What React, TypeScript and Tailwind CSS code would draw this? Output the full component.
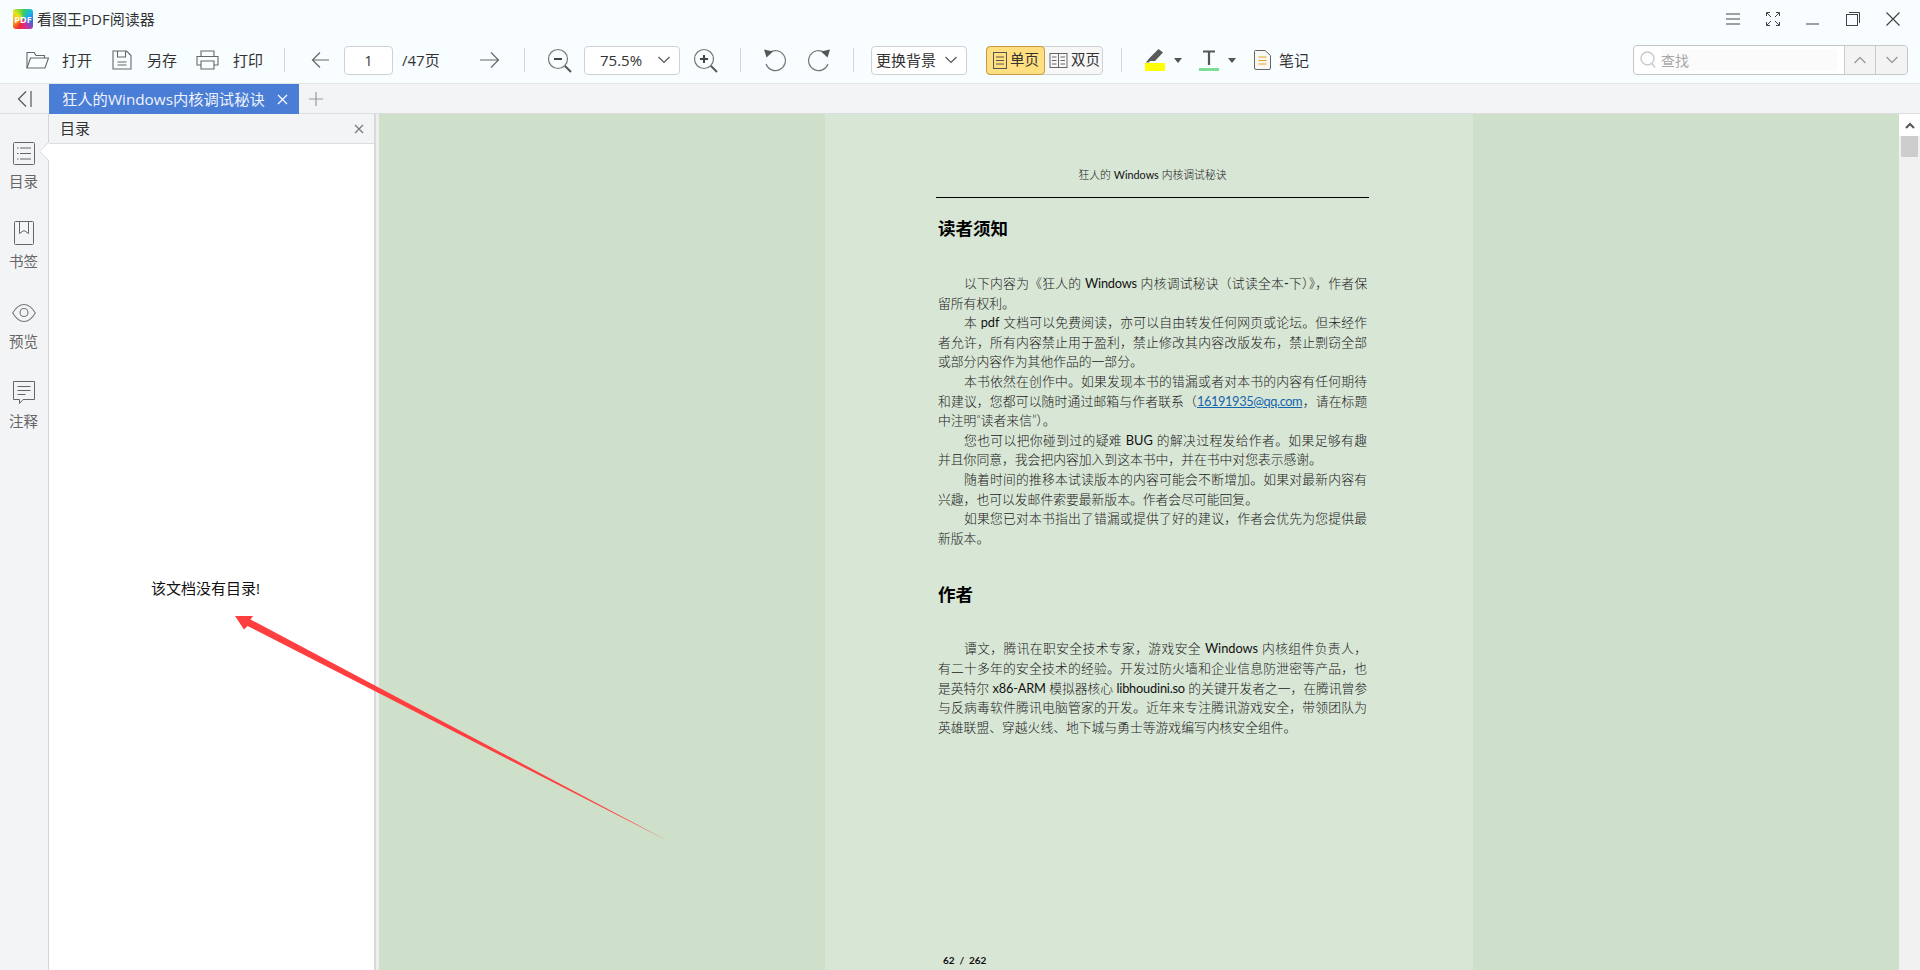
import React from "react"

const Sep = ({ className = "" }: { className?: string }) => (
  <div className={`h-[24px] w-px shrink-0 bg-[#d4d6d8] ${className}`} />
)

const Chevron = ({ className = "" }: { className?: string }) => (
  <svg width="14" height="8" viewBox="0 0 14 8" fill="none" stroke="#555" strokeWidth="1.2" className={className}>
    <path d="M1.5 1L7 6.5 12.5 1" />
  </svg>
)

const Caret = ({ className = "" }: { className?: string }) => (
  <svg width="8" height="5" viewBox="0 0 8 5" fill="#555" className={`shrink-0 ${className}`}>
    <path d="M0 0h8L4 5z" />
  </svg>
)

const Magnifier = ({ plus, className = "" }: { plus?: boolean; className?: string }) => (
  <svg width="25" height="25" viewBox="0 0 25 25" fill="none" className={`shrink-0 ${className}`}>
    <circle cx="11" cy="11" r="9.5" stroke="#777" strokeWidth="1.2" />
    <path d="M7 11h8" stroke="#444" strokeWidth="2" />
    {plus && <path d="M11 7v8" stroke="#444" strokeWidth="2" />}
    <path d="M18 18l6 6" stroke="#555" strokeWidth="2" />
  </svg>
)

const Rotate = ({ flip, className = "" }: { flip?: boolean; className?: string }) => (
  <svg width="24" height="24" viewBox="0 0 24 24" fill="none" className={`shrink-0 ${flip ? "-scale-x-100" : ""} ${className}`}>
    <path d="M6.5 4.5A10 10 0 1 1 3 16" stroke="#777" strokeWidth="1.2" />
    <path d="M1 1.5l9 2-6.5 6z" fill="#555" />
  </svg>
)

const PageLines = () => (
  <svg width="16" height="19" viewBox="0 0 16 19" fill="none" stroke="#555" className="shrink-0">
    <rect x="1.5" y="1.5" width="13" height="16" />
    <path d="M4 6h8M4 9.500h8M4 13h8" />
  </svg>
)

const BookLines = () => (
  <svg width="19" height="17" viewBox="0 0 19 17" fill="none" stroke="#666" className="shrink-0">
    <rect x="1" y="1.500" width="17" height="14" />
    <path d="M9.500 1.500v14M3 5h4.500M3 8.500h4.500M3 12h4.500M11.500 5H16M11.500 8.500H16M11.500 12H16" />
  </svg>
)

type Line = { t: string; i?: number; j?: number; mail?: string; k?: string }

const firstBlock: Line[] = [
  { t: "以下内容为《狂人的 Windows 内核调试秘诀（试读全本-下）》，作者保", i: 1, j: 1, k: "tracking-[-0.2px]" },
  { t: "留所有权利。" },
  { t: "本 pdf 文档可以免费阅读，亦可以自由转发任何网页或论坛。但未经作", i: 1, j: 1 },
  { t: "者允许，所有内容禁止用于盈利，禁止修改其内容改版发布，禁止剽窃全部", j: 1 },
  { t: "或部分内容作为其他作品的一部分。" },
  { t: "本书依然在创作中。如果发现本书的错漏或者对本书的内容有任何期待", i: 1, j: 1 },
  { t: "和建议，您都可以随时通过邮箱与作者联系（", mail: "，请在标题", j: 1, k: "tracking-[-0.4px]" },
  { t: "中注明“读者来信”）。" },
  { t: "您也可以把你碰到过的疑难 BUG 的解决过程发给作者。如果足够有趣", i: 1, j: 1 },
  { t: "并且你同意，我会把内容加入到这本书中，并在书中对您表示感谢。" },
  { t: "随着时间的推移本试读版本的内容可能会不断增加。如果对最新内容有", i: 1, j: 1 },
  { t: "兴趣，也可以发邮件索要最新版本。作者会尽可能回复。" },
  { t: "如果您已对本书指出了错漏或提供了好的建议，作者会优先为您提供最", i: 1, j: 1 },
  { t: "新版本。" },
]

const secondBlock: Line[] = [
  { t: "谭文，腾讯在职安全技术专家，游戏安全 Windows 内核组件负责人，", i: 1, j: 1 },
  { t: "有二十多年的安全技术的经验。开发过防火墙和企业信息防泄密等产品，也", j: 1 },
  { t: "是英特尔 x86-ARM 模拟器核心 libhoudini.so 的关键开发者之一，在腾讯曾参", j: 1, k: "tracking-[-0.2px]" },
  { t: "与反病毒软件腾讯电脑管家的开发。近年来专注腾讯游戏安全，带领团队为", j: 1 },
  { t: "英雄联盟、穿越火线、地下城与勇士等游戏编写内核安全组件。" },
]

// latin words sit in a heavier weight than the thin CJK body
function Mixed({ text }: { text: string }) {
  return (
    <>
      {text.split(/([A-Za-z0-9.@-]+)/).map((part, idx) =>
        idx % 2 ? (
          <span key={idx} className="font-normal text-[#111]">
            {part}
          </span>
        ) : (
          part
        ),
      )}
    </>
  )
}

function Lines({ lines, className = "" }: { lines: Line[]; className?: string }) {
  return (
    <div className={`text-[12.8px] leading-[19.6px] font-light text-[#1a1a1a] ${className}`}>
      {lines.map((l, idx) => (
        <div key={idx} className={`h-[19.6px] ${l.i ? "pl-[26px]" : ""} ${l.j ? "text-justify [text-align-last:justify]" : ""} ${l.k ?? ""}`}>
          <Mixed text={l.t} />
          {l.mail && (
            <>
              <span className="font-normal text-[#1565ad] underline">16191935@qq.com</span>
              {l.mail}
            </>
          )}
        </div>
      ))}
    </div>
  )
}

const sideItems = [
  {
    label: "目录",
    icon: (
      <svg width="22" height="23" viewBox="0 0 22 23" fill="none" stroke="#666">
        <rect x="0.500" y="0.500" width="21" height="22" rx="1" />
        <path d="M4 6h1.500M7 6h11M4 11.500h1.500M7 11.500h11M4 17h1.500M7 17h11" />
      </svg>
    ),
  },
  {
    label: "书签",
    icon: (
      <svg width="22" height="24" viewBox="0 0 22 24" fill="none" stroke="#666">
        <rect x="1.500" y="0.500" width="19" height="23" rx="1" />
        <path d="M6.500 0.500v12l4.500-3 4.500 3v-12" />
      </svg>
    ),
  },
  {
    label: "预览",
    icon: (
      <svg width="24" height="24" viewBox="0 0 24 24" fill="none" stroke="#777" strokeWidth="1.100">
        <path d="M0.700 12C4 6.500 8 3.500 12 3.500s8 3 11.300 8.500C20 17.500 16 20.500 12 20.500S4 17.500 0.700 12z" />
        <circle cx="12" cy="11.500" r="4" />
      </svg>
    ),
  },
  {
    label: "注释",
    icon: (
      <svg width="22" height="24" viewBox="0 0 22 24" fill="none" stroke="#666">
        <path d="M0.500 0.500h21v18H10l-3.500 4v-4h-6z" />
        <path d="M4.500 5.500h13M4.500 9.500h13M4.500 13.500h8" />
      </svg>
    ),
  },
]

export default function App() {
  return (
    <div className="relative flex h-[970px] w-[1920px] flex-col overflow-hidden bg-[#f3f4f6] font-['Open_Sans','Noto_Sans_CJK_SC',sans-serif] text-[#333]">
      {/* title bar */}
      <div className="flex h-[38px] shrink-0 items-center bg-[#f8fdff] pl-[13px] pr-[20px]">
        <div className="flex h-[20px] w-[20px] items-center justify-center rounded-[3px] bg-[conic-gradient(from_0deg,#3fcf4f,#19b5e8,#2c6fe0,#d02ca0,#f02a30,#f6b010,#e7e418,#3fcf4f)] text-[9px] font-bold leading-none text-white">
          PDF
        </div>
        <span className="ml-[4px] text-[15px] text-[#333]">看图王PDF阅读器</span>
        <div className="ml-auto flex items-center gap-[26px] text-[#444]">
          <svg width="14" height="14" viewBox="0 0 14 14" fill="none" stroke="#444">
            <path d="M0 2h14M0 7h14M0 12h14" />
          </svg>
          <svg width="14" height="14" viewBox="0 0 14 14" fill="none" stroke="#444">
            <path d="M0.500 4V0.500H4M10 0.500h3.500V4M0.500 10v3.500H4M13.500 10v3.500H10M1 1l4 4M13 1L9 5M1 13l4-4M13 13L9 9" />
          </svg>
          <svg width="14" height="14" viewBox="0 0 14 14" fill="none" stroke="#444">
            <path d="M0 12h13" />
          </svg>
          <svg width="14" height="14" viewBox="0 0 14 14" fill="none" stroke="#444">
            <rect x="0.500" y="2.500" width="11" height="11" />
            <path d="M3 0.500h10.500V11" />
          </svg>
          <svg width="14" height="14" viewBox="0 0 14 14" fill="none" stroke="#444" strokeWidth="1.200">
            <path d="M0.500 0.500l13 13M13.500 0.500l-13 13" />
          </svg>
        </div>
      </div>

      {/* toolbar */}
      <div className="flex h-[46px] shrink-0 items-center border-b border-[#e4e5e6] bg-[#f8fdff] pb-[1px] pl-[26px] text-[15px] text-[#333]">
        <svg width="23" height="18" viewBox="0 0 23 18" fill="none" stroke="#666" strokeWidth="1.100" className="shrink-0">
          <path d="M1 17V1.500h7l2 3h8.500V7" />
          <path d="M1 17L4.500 7H22.500L19 17z" />
        </svg>
        <span className="ml-[13px] w-[30px] shrink-0">打开</span>
        <svg width="20" height="20" viewBox="0 0 20 20" fill="none" stroke="#666" strokeWidth="1.100" className="ml-[20px] shrink-0">
          <path d="M1 1h13.500L19 5.500V19H1z" />
          <path d="M5.500 1v6h8V1M5.500 12h9M5.500 15h9" />
        </svg>
        <span className="ml-[15px] w-[30px] shrink-0">另存</span>
        <svg width="23" height="20" viewBox="0 0 23 20" fill="none" stroke="#666" strokeWidth="1.100" className="ml-[19px] shrink-0">
          <path d="M5 6V1h13v5M5 15H1V6.500h21V15h-4" />
          <path d="M5 11h13v8H5z" />
        </svg>
        <span className="ml-[14px] w-[30px] shrink-0">打印</span>
        <Sep className="ml-[21px]" />
        <svg width="18" height="18" viewBox="0 0 18 18" fill="none" stroke="#666" strokeWidth="1.200" className="ml-[26px] shrink-0">
          <path d="M18 9H1.500M9 1.500L1.500 9 9 16.500" />
        </svg>
        <div className="ml-[15px] flex h-[29px] w-[49px] shrink-0 items-center justify-center rounded-[4px] border border-[#cfd1d3] bg-white text-[14px]">
          1
        </div>
        <span className="ml-[9px] w-[39px] shrink-0">/47页</span>
        <svg width="20" height="18" viewBox="0 0 20 18" fill="none" stroke="#666" strokeWidth="1.200" className="ml-[39px] shrink-0">
          <path d="M0 9h18.500M11 1.500L18.500 9 11 16.500" />
        </svg>
        <Sep className="ml-[24px]" />
        <Magnifier className="ml-[22px]" />
        <div className="ml-[12px] flex h-[29px] w-[96px] shrink-0 items-center rounded-[4px] border border-[#cfd1d3] bg-white pl-[15px] pr-[8px]">
          <span>75.5%</span>
          <Chevron className="ml-auto" />
        </div>
        <Magnifier plus className="ml-[13px]" />
        <Sep className="ml-[22px]" />
        <Rotate className="ml-[22px]" />
        <Rotate flip className="ml-[20px]" />
        <Sep className="ml-[22px]" />
        <div className="ml-[17px] flex h-[29px] w-[96px] shrink-0 items-center rounded-[4px] border border-[#cfd1d3] bg-white pl-[4px] pr-[8px]">
          <span>更换背景</span>
          <Chevron className="ml-auto" />
        </div>
        <div className="ml-[19px] flex h-[29px] w-[117px] shrink-0 items-center rounded-[4px] border border-[#cfd1d3] bg-[#f7f7f8]">
          <div className="-ml-px -my-px flex h-[29px] w-[59px] shrink-0 items-center gap-[2px] rounded-[4px] border border-[#c99a45] bg-[#ffdf7f] pl-[5px]">
            <PageLines />
            <span className="text-[14.500px]">单页</span>
          </div>
          <div className="flex items-center gap-[3px] pl-[4px]">
            <BookLines />
            <span className="text-[14.500px]">双页</span>
          </div>
        </div>
        <Sep className="ml-[18px]" />
        <div className="ml-[23px] flex w-[20px] shrink-0 flex-col">
          <svg width="20" height="14" viewBox="0 0 20 14" fill="#5a5a5a">
            <path d="M13.500 0l4.500 3.500L10 12H5l-1 1.500H1L4.500 9z" />
          </svg>
          <div className="h-[8px] bg-[#ffff00]" />
        </div>
        <Caret className="ml-[9px]" />
        <div className="ml-[17px] flex w-[20px] shrink-0 flex-col items-center">
          <svg width="14" height="15" viewBox="0 0 14 15" fill="none" stroke="#555" strokeWidth="2.200">
            <path d="M1 1.500h12M7 1.500V15" />
          </svg>
          <div className="mt-[3px] h-[3px] w-[20px] bg-[#7fdc95]" />
        </div>
        <Caret className="ml-[9px]" />
        <svg width="17" height="20" viewBox="0 0 17 20" fill="none" className="ml-[18px] shrink-0">
          <path d="M1.500 0.500H11l5.500 5V18a1.500 1.500 0 0 1-1.500 1.500H2A1.500 1.500 0 0 1 .5 18V1.500a1 1 0 0 1 1-1z" stroke="#666" fill="#f8f8f4" />
          <path d="M4.500 7h8M4.500 10.500h8M4.500 14h8" stroke="#e8a21e" strokeWidth="1.200" />
        </svg>
        <span className="ml-[8px] w-[30px] shrink-0">笔记</span>
        {/* search */}
        <div className="ml-auto mr-[12px] flex h-[30px] w-[275px] shrink-0 items-stretch rounded-[4px] border border-[#c4c6c8] bg-white">
          <div className="flex w-[210px] items-center pl-[6px]">
            <svg width="16" height="18" viewBox="0 0 16 18" fill="none" stroke="#c5cbd0" strokeWidth="1.400" className="shrink-0">
              <circle cx="7.500" cy="7.500" r="6.500" />
              <path d="M12 12.500l3 4" />
            </svg>
            <div className="ml-[5px] flex h-[22px] w-[176px] items-center bg-[#fbfbfc] text-[14px] text-[#a8a8a8]">查找</div>
          </div>
          <div className="flex w-[31px] items-center justify-center border-l border-[#c9cbcd] bg-[#f3f3f4]">
            <Chevron className="rotate-180 opacity-60" />
          </div>
          <div className="flex flex-1 items-center justify-center rounded-r-[4px] border-l border-[#c9cbcd] bg-[#f3f3f4]">
            <Chevron className="opacity-60" />
          </div>
        </div>
      </div>

      {/* tabs */}
      <div className="flex h-[30px] shrink-0 items-stretch border-b border-[#dcdddf] bg-[#f3f4f6]">
        <div className="flex w-[49px] shrink-0 items-center pl-[17px]">
          <svg width="15" height="18" viewBox="0 0 15 18" fill="none" stroke="#555" strokeWidth="1.200">
            <path d="M9 1.500L1.500 9 9 16.500M14 1v16" />
          </svg>
        </div>
        <div className="-mb-px flex w-[250px] shrink-0 items-center bg-[#4a7dd6] pl-[13px] text-[15.300px] text-[#eef3fb]">
          <span className="w-[212px] overflow-hidden whitespace-nowrap">狂人的Windows内核调试秘诀</span>
          <svg width="11" height="11" viewBox="0 0 11 11" fill="none" stroke="#fff" strokeWidth="1.200" className="ml-[3px]">
            <path d="M1 1l9 9M10 1l-9 9" />
          </svg>
        </div>
        <div className="flex items-center pl-[10px]">
          <svg width="14" height="14" viewBox="0 0 14 14" fill="none" stroke="#999" strokeWidth="1.200">
            <path d="M7 0v14M0 7h14" />
          </svg>
        </div>
      </div>

      {/* body */}
      <div className="flex min-h-0 flex-1">
        <div className="relative w-[49px] shrink-0 border-r border-[#d4d5d7] bg-[#f3f4f6] pt-[27px]">
          {sideItems.map((it) => (
            <div key={it.label} className="flex h-[80px] flex-col items-center pr-[1px] text-[14.500px] text-[#666]">
              <div className="flex h-[24px] items-center">{it.icon}</div>
              <span className="mt-[7px] leading-[20px]">{it.label}</span>
            </div>
          ))}
          <svg width="10" height="20" viewBox="0 0 10 20" className="absolute right-[-1px] top-[28px]">
            <path d="M10 0L0 9.500 10 19z" fill="#fff" />
            <path d="M10 0L0.700 9.500 10 19" fill="none" stroke="#d8d9da" />
          </svg>
        </div>

        <div className="flex w-[325px] shrink-0 flex-col bg-white">
          <div className="flex h-[30px] shrink-0 items-center justify-between border-b border-[#dcdddf] bg-[#f3f4f6] pl-[11px] pr-[10px] text-[15px] text-[#333]">
            <span>目录</span>
            <svg width="10" height="10" viewBox="0 0 10 10" fill="none" stroke="#777" strokeWidth="1.200">
              <path d="M1 1l8 8M9 1L1 9" />
            </svg>
          </div>
          <div className="pl-[102px] pt-[434px] text-[15px] leading-[20px] text-[#111]">该文档没有目录!</div>
        </div>

        <div className="w-[5px] shrink-0 border-l-2 border-[#d9d9d9] bg-[#eeeeee]" />

        <div className="min-w-0 flex-1 overflow-hidden bg-[#cee0ca] pl-[446px]">
          <div className="h-full w-[648px] bg-[#d8e6d6] pl-[113px] pt-[53px] font-['Lato','Noto_Sans_CJK_SC',sans-serif]">
            <div className="w-[429px]">
              <div className="h-[16px] text-center text-[10.800px] font-light leading-[16px] text-[#222]">
                <Mixed text="狂人的 Windows 内核调试秘诀" />
              </div>
              <div className="-ml-[2px] mt-[14px] h-px w-[433px] bg-black" />
              <div className="mt-[19px] h-[24px] text-[17.500px] font-bold leading-[24px] text-black">读者须知</div>
              <Lines lines={firstBlock} className="mt-[33px]" />
              <div className="mt-[35px] h-[24px] text-[17.500px] font-bold leading-[24px] text-black">作者</div>
              <Lines lines={secondBlock} className="mt-[32px]" />
              <div className="ml-[5px] mt-[216px] whitespace-pre text-[10px] font-bold leading-[14px] text-[#111]">62  /  262</div>
            </div>
          </div>
        </div>

        {/* scrollbar */}
        <div className="flex w-[21px] shrink-0 flex-col items-center bg-[#f1f1f1] pt-0">
          <div className="flex h-[22px] w-full items-center justify-center bg-white">
            <svg width="10" height="7" viewBox="0 0 10 7" fill="none" stroke="#555" strokeWidth="2">
              <path d="M1 6l4-4 4 4" />
            </svg>
          </div>
          <div className="h-[21px] w-[17px] bg-[#cdcdcd]" />
        </div>
      </div>

      {/* arrow annotation */}
      <svg width="1920" height="970" viewBox="0 0 1920 970" className="pointer-events-none absolute left-0 top-0">
        <polygon points="235,616 253,616 250.500,619.500 668,841 247.500,626 244,629.500" fill="#ff3f3f" />
      </svg>
    </div>
  )
}
